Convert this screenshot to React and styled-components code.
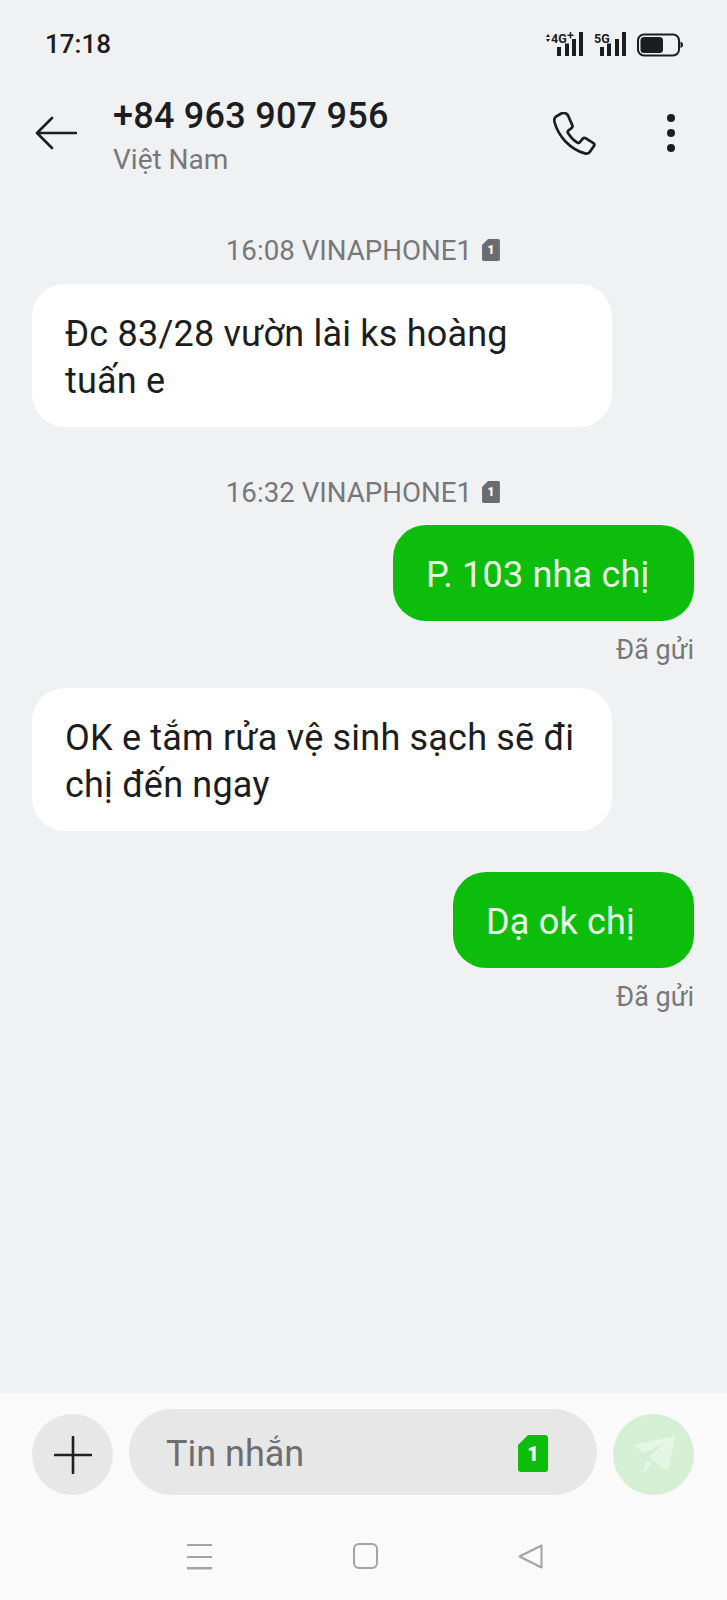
import React from 'react';
import styled, { createGlobalStyle } from 'styled-components';

const COLORS = {
  page: '#f0f1f3',
  footer: '#fafafa',
  ink: '#1c1d20',
  muted: '#76787c',
  green: '#0cbd0c',
  field: '#e7e7e8',
};

const GlobalStyle = createGlobalStyle`
  html, body { margin: 0; padding: 0; }
  body { background: ${COLORS.page}; font-family: Roboto, "Liberation Sans", sans-serif; }
`;

const Screen = styled.div`
  width: 727px;
  height: 1600px;
  display: flex;
  flex-direction: column;
  overflow: hidden;
  background: ${COLORS.page};
`;

const StatusBar = styled.div`
  height: 88px;
  flex: none;
  display: flex;
  align-items: center;
  justify-content: space-between;
  padding: 0 44px 0 45px;
`;

const Clock = styled.div`
  font-size: 26px;
  font-weight: 500;
  color: ${COLORS.ink};
`;

const Header = styled.header`
  height: 86px;
  flex: none;
  display: flex;
  align-items: center;
  padding: 2px 52px 0 35px;
`;

const TitleBlock = styled.div`
  flex: 1;
  margin-left: 36px;
  padding-top: 6px;
  display: flex;
  flex-direction: column;
  gap: 4px;
`;

const Title = styled.div`
  font-size: 36px;
  letter-spacing: 0.25px;
  line-height: 44px;
  font-weight: 500;
  color: ${COLORS.ink};
`;

const Subtitle = styled.div`
  font-size: 28px;
  line-height: 36px;
  color: ${COLORS.muted};
`;

const HeaderActions = styled.div`
  display: flex;
  align-items: center;
  gap: 71px;
`;

const Thread = styled.main`
  flex: 1;
  display: flex;
  flex-direction: column;
  padding: 0 33px 0 32px;
`;

const Stamp = styled.div`
  height: 50px;
  margin-top: ${(p) => p.$top}px;
  display: flex;
  align-items: center;
  justify-content: center;
  gap: 10px;
  font-size: 27.7px;
  color: ${COLORS.muted};
`;

const Bubble = styled.div`
  box-sizing: border-box;
  align-self: ${(p) => (p.$sent ? 'flex-end' : 'flex-start')};
  width: ${(p) => p.$width}px;
  margin-top: ${(p) => p.$top || 0}px;
  padding: 27px 33px 22px;
  padding-right: ${(p) => (p.$sent ? 0 : 34)}px;
  border-radius: 33px;
  background: ${(p) => (p.$sent ? COLORS.green : '#fff')};
  color: ${(p) => (p.$sent ? '#eafbe6' : COLORS.ink)};
  font-size: 36px;
  letter-spacing: 0.2px;
  line-height: 47px;
`;

const SentLabel = styled.div`
  align-self: flex-end;
  margin-top: 13px;
  font-size: 27px;
  line-height: 32px;
  color: ${COLORS.muted};
`;

const Footer = styled.footer`
  height: 207px;
  flex: none;
  box-sizing: border-box;
  background: ${COLORS.footer};
  display: flex;
  flex-direction: column;
`;

const Composer = styled.div`
  height: 102px;
  padding: 0 33px 0 32px;
  box-sizing: border-box;
  display: flex;
  align-items: flex-end;
  gap: 16px;
`;

const RoundButton = styled.div`
  width: 81px;
  height: 81px;
  flex: none;
  border-radius: 50%;
  background: ${(p) => p.$bg};
  display: flex;
  align-items: center;
  justify-content: center;
`;

const Field = styled.div`
  flex: 1;
  height: 86px;
  box-sizing: border-box;
  border-radius: 43px;
  background: ${COLORS.field};
  display: flex;
  align-items: center;
  justify-content: space-between;
  padding: 3px 49px 0 37px;
  font-size: 36px;
  color: #6d6e71;
`;

const NavBar = styled.nav`
  flex: 1;
  display: flex;
  align-items: center;
  justify-content: center;
  gap: 140px;
  padding: 18px 0 0 2px;
`;

const BackIcon = () => (
  <svg width="42" height="34" viewBox="0 0 42 34" fill="none" stroke={COLORS.ink} strokeWidth="2.6" strokeLinecap="round" strokeLinejoin="round">
    <path d="M41 17H2M17 2 2 17l15 15" />
  </svg>
);

const PhoneIcon = () => (
  <svg width="43" height="43" viewBox="0 0 44 44" fill="none" stroke={COLORS.ink} strokeWidth="2.8" strokeLinejoin="round">
    <path d="M8 1.800 3 4.800C1.200 6 1 8 1.600 10.500 3.600 18 8 25 13 30.500c5 5 12 10 19.500 11.800 2.600.7 4.300 0 5.300-1.600l4.200-6.200c.6-1 .3-2-.7-2.700l-8-5c-1-.6-2-.5-2.800.4l-3 3.600c-.8 1-1.700 1-2.800.4-3.600-2-6.700-5.600-9.200-9.400-.7-1-.6-2 .3-2.800l3.400-2.800c.9-.8 1-1.800.5-2.800L15.400 3.500C13.500 1 10.500.4 8 1.800Z" />
  </svg>
);

const MoreIcon = () => (
  <svg width="8" height="38" viewBox="0 0 8 38" fill={COLORS.ink}>
    <circle cx="4" cy="4" r="4" />
    <circle cx="4" cy="19" r="4" />
    <circle cx="4" cy="34" r="4" />
  </svg>
);

const StatusIcons = () => (
  <svg width="141" height="27" viewBox="0 0 141 27" fill={COLORS.ink}>
    <path d="M4 6 6 3l2 3ZM4 8h4l-2 3Z" />
    <text x="9" y="11.500" fontFamily="Roboto, sans-serif" fontSize="12.500" fontWeight="700">4G</text>
    <path d="M27.800 1h1.400v2.500h2.300v1.400h-2.300v2.500h-1.400V4.900h-2.300V3.500h2.300Z" />
    <rect x="15" y="16" width="4" height="9" />
    <rect x="23" y="12.500" width="4" height="12.500" />
    <rect x="30" y="8" width="4" height="17" />
    <rect x="37" y="1" width="4" height="24" />
    <text x="52" y="11.500" fontFamily="Roboto, sans-serif" fontSize="12.500" fontWeight="700">5G</text>
    <rect x="58" y="16" width="4" height="9" />
    <rect x="65" y="12.500" width="4" height="12.500" />
    <rect x="73" y="8" width="4" height="17" />
    <rect x="80" y="1" width="4" height="24" />
    <rect x="96" y="3.500" width="41" height="21" rx="6" fill="none" stroke={COLORS.ink} strokeWidth="2" />
    <rect x="98.500" y="6" width="22.500" height="16" rx="3.500" />
    <path d="M138.500 10.500c1.800.4 2.500 1.700 2.500 3.300s-.7 2.900-2.500 3.300Z" />
  </svg>
);

const SimIcon = ({ width, height, fill }) => (
  <svg width={width} height={height} viewBox="0 0 30 37">
    <path d="M10 0h17a3 3 0 0 1 3 3v31a3 3 0 0 1-3 3H3a3 3 0 0 1-3-3V10Z" fill={fill} />
    <text x="15" y="26" textAnchor="middle" fill="#fff" fontFamily="Roboto, sans-serif" fontSize="20" fontWeight="900">1</text>
  </svg>
);

const PlusIcon = () => (
  <svg width="38" height="38" viewBox="0 0 38 38" stroke="#1f2023" strokeWidth="2.600" strokeLinecap="round">
    <path d="M19 1v36M1 19h36" />
  </svg>
);

const SendIcon = () => (
  <svg width="44" height="38" viewBox="0 0 44 38" fill="#e4f6e4">
    <path d="M43 0 1 9l11 8 20-10-15 14 19 14Z" />
    <path d="M15 24l5 4-8 8-1-2Z" />
  </svg>
);

const MenuGlyph = () => (
  <svg width="26" height="26" viewBox="0 0 26 26" fill="#a3a3a5">
    <rect x="0" y="0" width="25" height="2" />
    <rect x="0" y="12" width="25" height="2" />
    <rect x="0" y="23" width="25" height="2.500" />
  </svg>
);

const HomeGlyph = () => (
  <svg width="25" height="33" viewBox="0 0 25 33" fill="none" stroke="#a3a3a5" strokeWidth="2">
    <rect x="1" y="4" width="23" height="24" rx="5" />
  </svg>
);

const TriangleGlyph = () => (
  <svg width="25" height="25" viewBox="0 0 25 25" fill="none" stroke="#a3a3a5" strokeWidth="2" strokeLinejoin="round">
    <path d="M23.500 1.500v22L1.500 12.500Z" />
  </svg>
);

const App = () => (
  <>
    <GlobalStyle />
    <Screen>
      <StatusBar>
        <Clock>17:18</Clock>
        <StatusIcons />
      </StatusBar>
      <Header>
        <BackIcon />
        <TitleBlock>
          <Title>+84 963 907 956</Title>
          <Subtitle>Việt Nam</Subtitle>
        </TitleBlock>
        <HeaderActions>
          <PhoneIcon />
          <MoreIcon />
        </HeaderActions>
      </Header>
      <Thread>
        <Stamp $top={49}>
          16:08 VINAPHONE1
          <SimIcon width={18} height={22} fill="#6b6c6f" />
        </Stamp>
        <Bubble $width={580} $top={9}>Đc 83/28 vườn lài ks hoàng tuấn e</Bubble>
        <Stamp $top={40}>
          16:32 VINAPHONE1
          <SimIcon width={18} height={22} fill="#6b6c6f" />
        </Stamp>
        <Bubble $sent $width={301} $top={8}>P. 103 nha chị</Bubble>
        <SentLabel>Đã gửi</SentLabel>
        <Bubble $width={580} $top={22}>OK e tắm rửa vệ sinh sạch sẽ đi chị đến ngay</Bubble>
        <Bubble $sent $width={241} $top={41}>Dạ ok chị</Bubble>
        <SentLabel>Đã gửi</SentLabel>
      </Thread>
      <Footer>
        <Composer>
          <RoundButton $bg={COLORS.field}>
            <PlusIcon />
          </RoundButton>
          <Field>
            Tin nhắn
            <SimIcon width={30} height={37} fill={COLORS.green} />
          </Field>
          <RoundButton $bg="#d5efd5">
            <SendIcon />
          </RoundButton>
        </Composer>
        <NavBar>
          <MenuGlyph />
          <HomeGlyph />
          <TriangleGlyph />
        </NavBar>
      </Footer>
    </Screen>
  </>
);

export default App;
